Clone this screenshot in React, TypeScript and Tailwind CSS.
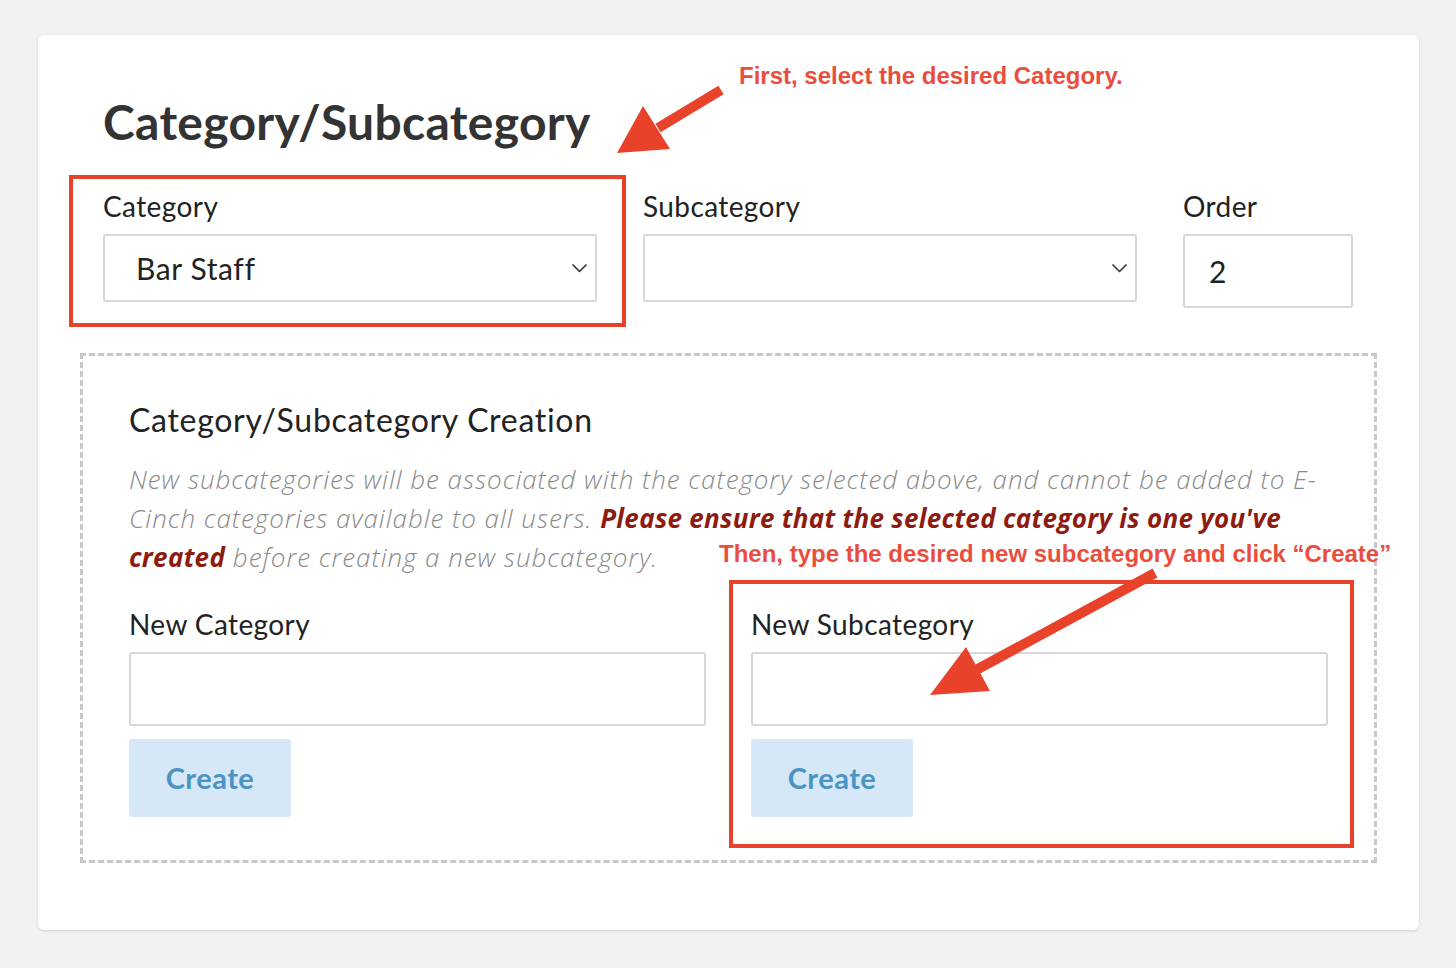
import React from "react";

const font = { fontFamily: "Lato, 'Open Sans', sans-serif" };
const noteFont = { fontFamily: "'Liberation Sans', Arial, sans-serif" };

function Chevron() {
  return (
    <svg width="17" height="10" viewBox="0 0 17 10" fill="none" className="shrink-0">
      <path d="M1.5 1.5 L8.5 8.5 L15.5 1.5" stroke="#2b2b2b" strokeWidth="1.5" />
    </svg>
  );
}

function Field({ label, children }: { label: string; children: React.ReactNode }) {
  return (
    <div className="flex flex-col">
      <label className="mb-[12px] text-[28px] leading-[32px] tracking-[0.4px] text-[#222]">{label}</label>
      {children}
    </div>
  );
}

export default function App() {
  return (
    <div className="relative min-h-screen bg-[#f1f2f4] pt-[35px] pl-[38px]" style={font}>
      {/* 卡片 */}
      <div className="w-[1381px] rounded-md bg-white px-[42px] pt-[59px] pb-[67px] shadow-[0_1px_3px_rgba(0,0,0,0.14)]">
        <div className="px-[23px]">
          <h1 className="text-[48px] font-bold leading-[56px] tracking-[0.3px] text-[#333]">
            Category/Subcategory
          </h1>

          <div className="mt-[40px] grid grid-cols-[494px_494px_170px] items-start gap-x-[46px]">
            <Field label="Category">
              <div className="flex h-[68px] items-center justify-between rounded-[3px] border-2 border-[#d4d8dd] pl-[31px] pr-[7px]">
                <span className="text-[30px] tracking-[0.6px] text-[#222]">Bar Staff</span>
                <Chevron />
              </div>
            </Field>
            <Field label="Subcategory">
              <div className="flex h-[68px] items-center justify-end rounded-[3px] border-2 border-[#d4d8dd] pr-[7px]">
                <Chevron />
              </div>
            </Field>
            <Field label="Order">
              <div className="flex h-[74px] items-center rounded-[3px] border-2 border-[#d4d8dd] pl-[24px]">
                <span className="text-[30px] text-[#222]">2</span>
              </div>
            </Field>
          </div>
        </div>

        {/* 新建区域 */}
        <div className="mt-[45px] border-[3px] border-dashed border-[#c8c8c8] px-[46px] pt-[44px] pb-[43px]">
          <h2 className="text-[32px] leading-[40px] tracking-[0.7px] text-[#222]">Category/Subcategory Creation</h2>
          <p
            className="mt-[20px] whitespace-nowrap text-[26px] font-light italic leading-[39px] tracking-[0.95px] text-[#8a8a8a]"
            style={{ fontFamily: "'Open Sans', Lato, sans-serif" }}
          >
            New subcategories will be associated with the category selected above, and cannot be added to E-
            <br />
            Cinch categories available to all users.{" "}
            <span className="font-bold tracking-[0.3px] text-[#8e1b10]">
              Please ensure that the selected category is one you've
              <br />
              created
            </span>{" "}
            before creating a new subcategory.
          </p>

          <div className="mt-[31px] grid grid-cols-2 gap-x-[45px]">
            {["New Category", "New Subcategory"].map((l) => (
              <div key={l} className="flex flex-col">
                <label className="mb-[12px] text-[28px] leading-[32px] tracking-[0.4px] text-[#222]">{l}</label>
                <div className="h-[74px] rounded-[3px] border-2 border-[#d4d8dd]" />
                <button
                  type="button"
                  className="mt-[13px] h-[78px] w-[162px] rounded-[3px] bg-[#d6e8f8] text-[29px] font-bold tracking-[0.5px] text-[#4a94c4]"
                >
                  Create
                </button>
              </div>
            ))}
          </div>
        </div>
      </div>

      {/* 标注 */}
      <div className="absolute left-[69px] top-[175px] h-[152px] w-[557px] border-4 border-[#e8432a]" />
      <div className="absolute left-[729px] top-[580px] h-[268px] w-[625px] border-4 border-[#e8432a]" />
      <div
        className="absolute left-[739px] top-[58px] whitespace-nowrap text-[24px] leading-[36px] font-bold text-[#eb4d3d]"
        style={noteFont}
      >
        First, select the desired Category.
      </div>
      <div
        className="absolute left-[719px] top-[536px] whitespace-nowrap text-[24px] leading-[36px] font-bold text-[#eb4d3d]"
        style={noteFont}
      >
        Then, type the desired new subcategory and click “Create”
      </div>
      <svg className="pointer-events-none absolute left-0 top-0" width="1456" height="968" viewBox="0 0 1456 968">
        <line x1="721" y1="90" x2="658" y2="128" stroke="#e8432a" strokeWidth="10" />
        <polygon points="617,153 643,106 670,149" fill="#e8432a" />
        <line x1="1155" y1="573" x2="976" y2="670" stroke="#e8432a" strokeWidth="10" />
        <polygon points="930,695 966,647 990,691" fill="#e8432a" />
      </svg>
    </div>
  );
}
